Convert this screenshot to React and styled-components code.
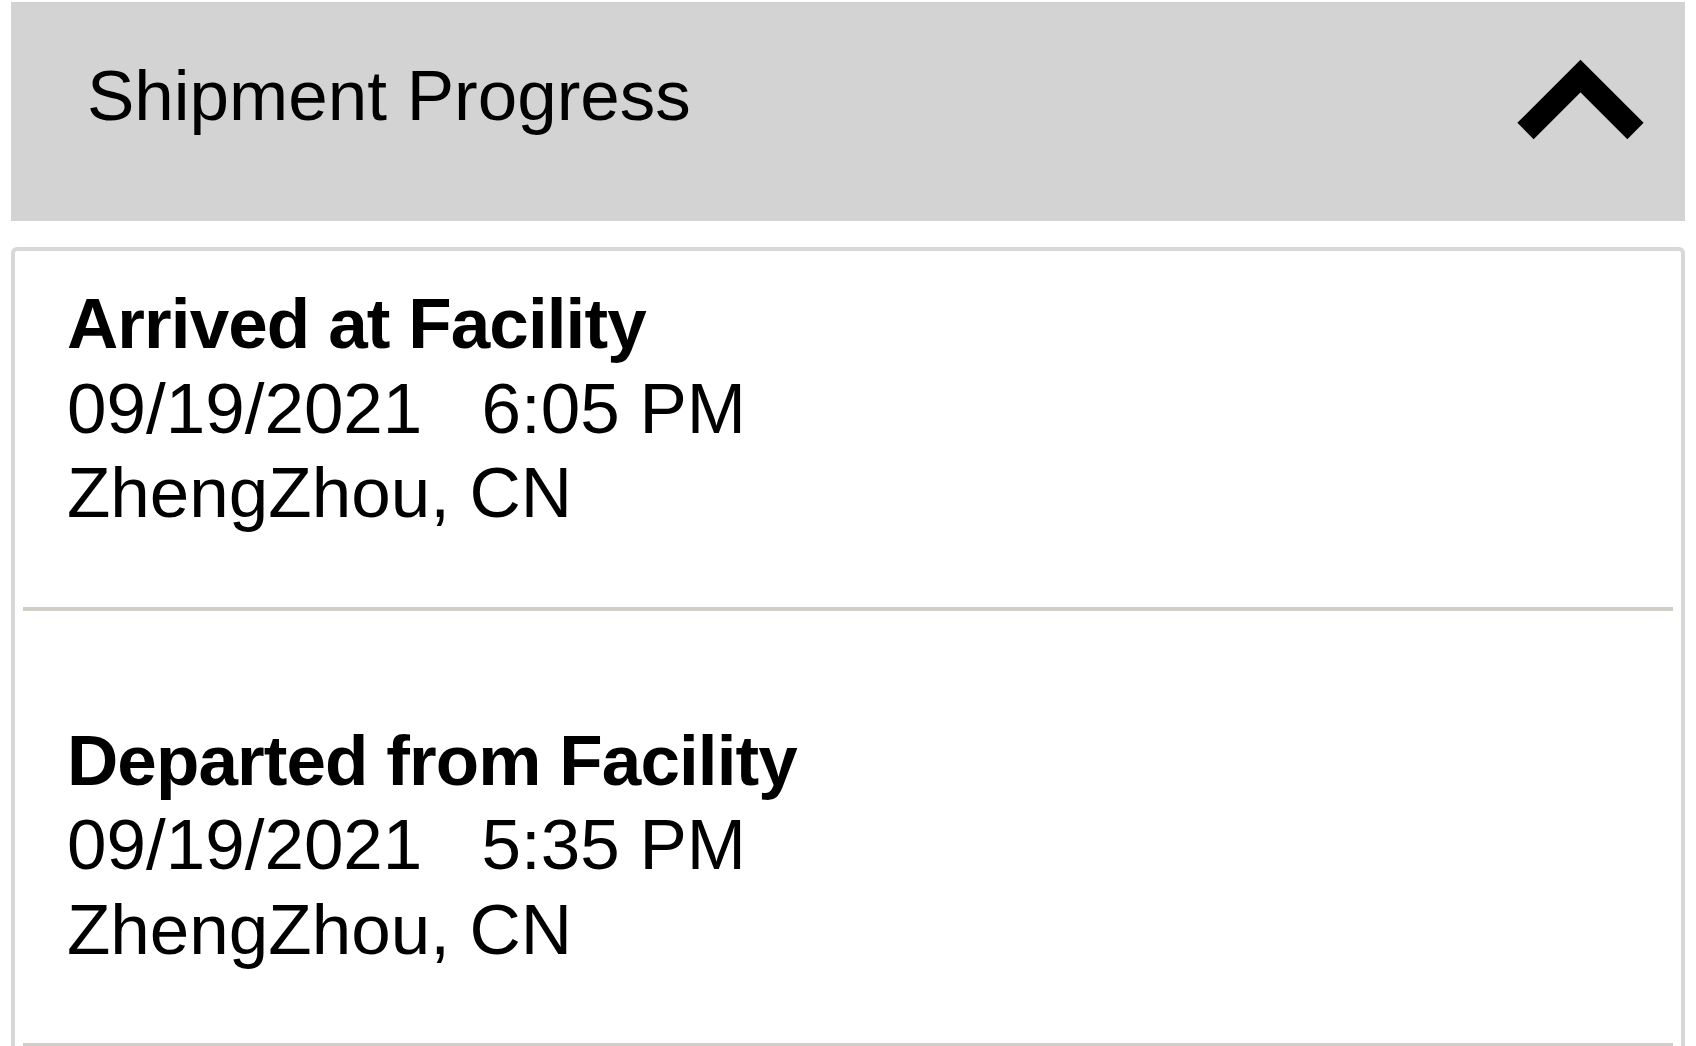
import React from "react";
import styled, { createGlobalStyle } from "styled-components";

const GlobalStyle = createGlobalStyle`
  html, body {
    margin: 0;
    padding: 0;
    background: #ffffff;
  }
  body {
    font-family: "Liberation Sans", Arial, sans-serif;
    color: #000;
    overflow: hidden;
  }
`;

const Page = styled.div`
  padding: 2px 11px 0 11px;
  display: flex;
  flex-direction: column;
  gap: 26px;
`;

const Header = styled.div`
  box-sizing: border-box;
  height: 219px;
  background: #d3d3d3;
  display: flex;
  justify-content: space-between;
  align-items: flex-start;
  padding: 52px 34px 0 76px;
`;

const HeaderTitle = styled.h1`
  margin: 0;
  font-size: 71px;
  line-height: 84.5px;
  font-weight: 400;
  letter-spacing: 0;
  color: #000;
`;

const Chevron = styled.svg`
  display: block;
  margin-top: 3px;
  flex: none;
`;

const Card = styled.div`
  border: 4px solid #d8d8d8;
  border-bottom: none;
  border-radius: 6px 6px 0 0;
  background: #fff;
  padding-bottom: 80px;
`;

const Item = styled.div`
  padding: ${(p) => (p.$first ? "31px" : "108px")} 52px 71px 52px;
  display: flex;
  flex-direction: column;
`;

const Title = styled.div`
  font-size: 71px;
  line-height: 84.5px;
  font-weight: 700;
  letter-spacing: -0.9px;
`;

const Line = styled.div`
  font-size: 71px;
  line-height: 84.5px;
  font-weight: 400;
  white-space: pre;
`;

const Divider = styled.div`
  height: 4px;
  margin: 0 8px;
  background: #d1cec8;
`;

const events = [
  { title: "Arrived at Facility", date: "09/19/2021", time: "6:05 PM", place: "ZhengZhou, CN" },
  { title: "Departed from Facility", date: "09/19/2021", time: "5:35 PM", place: "ZhengZhou, CN" },
];

export default function App() {
  return (
    <>
      <GlobalStyle />
      <Page>
        <Header>
          <HeaderTitle>Shipment Progress</HeaderTitle>
          <Chevron width="140" height="90" viewBox="0 0 140 90">
            <polyline
              points="14.5,74 69.5,19 124.5,74"
              fill="none"
              stroke="#000"
              strokeWidth="23"
              strokeLinejoin="miter"
              strokeLinecap="butt"
            />
          </Chevron>
        </Header>
        <Card>
          {events.map((e, i) => (
            <React.Fragment key={i}>
              <Item $first={i === 0}>
                <Title>{e.title}</Title>
                <Line>{`${e.date}   ${e.time}`}</Line>
                <Line>{e.place}</Line>
              </Item>
              <Divider />
            </React.Fragment>
          ))}
        </Card>
      </Page>
    </>
  );
}
